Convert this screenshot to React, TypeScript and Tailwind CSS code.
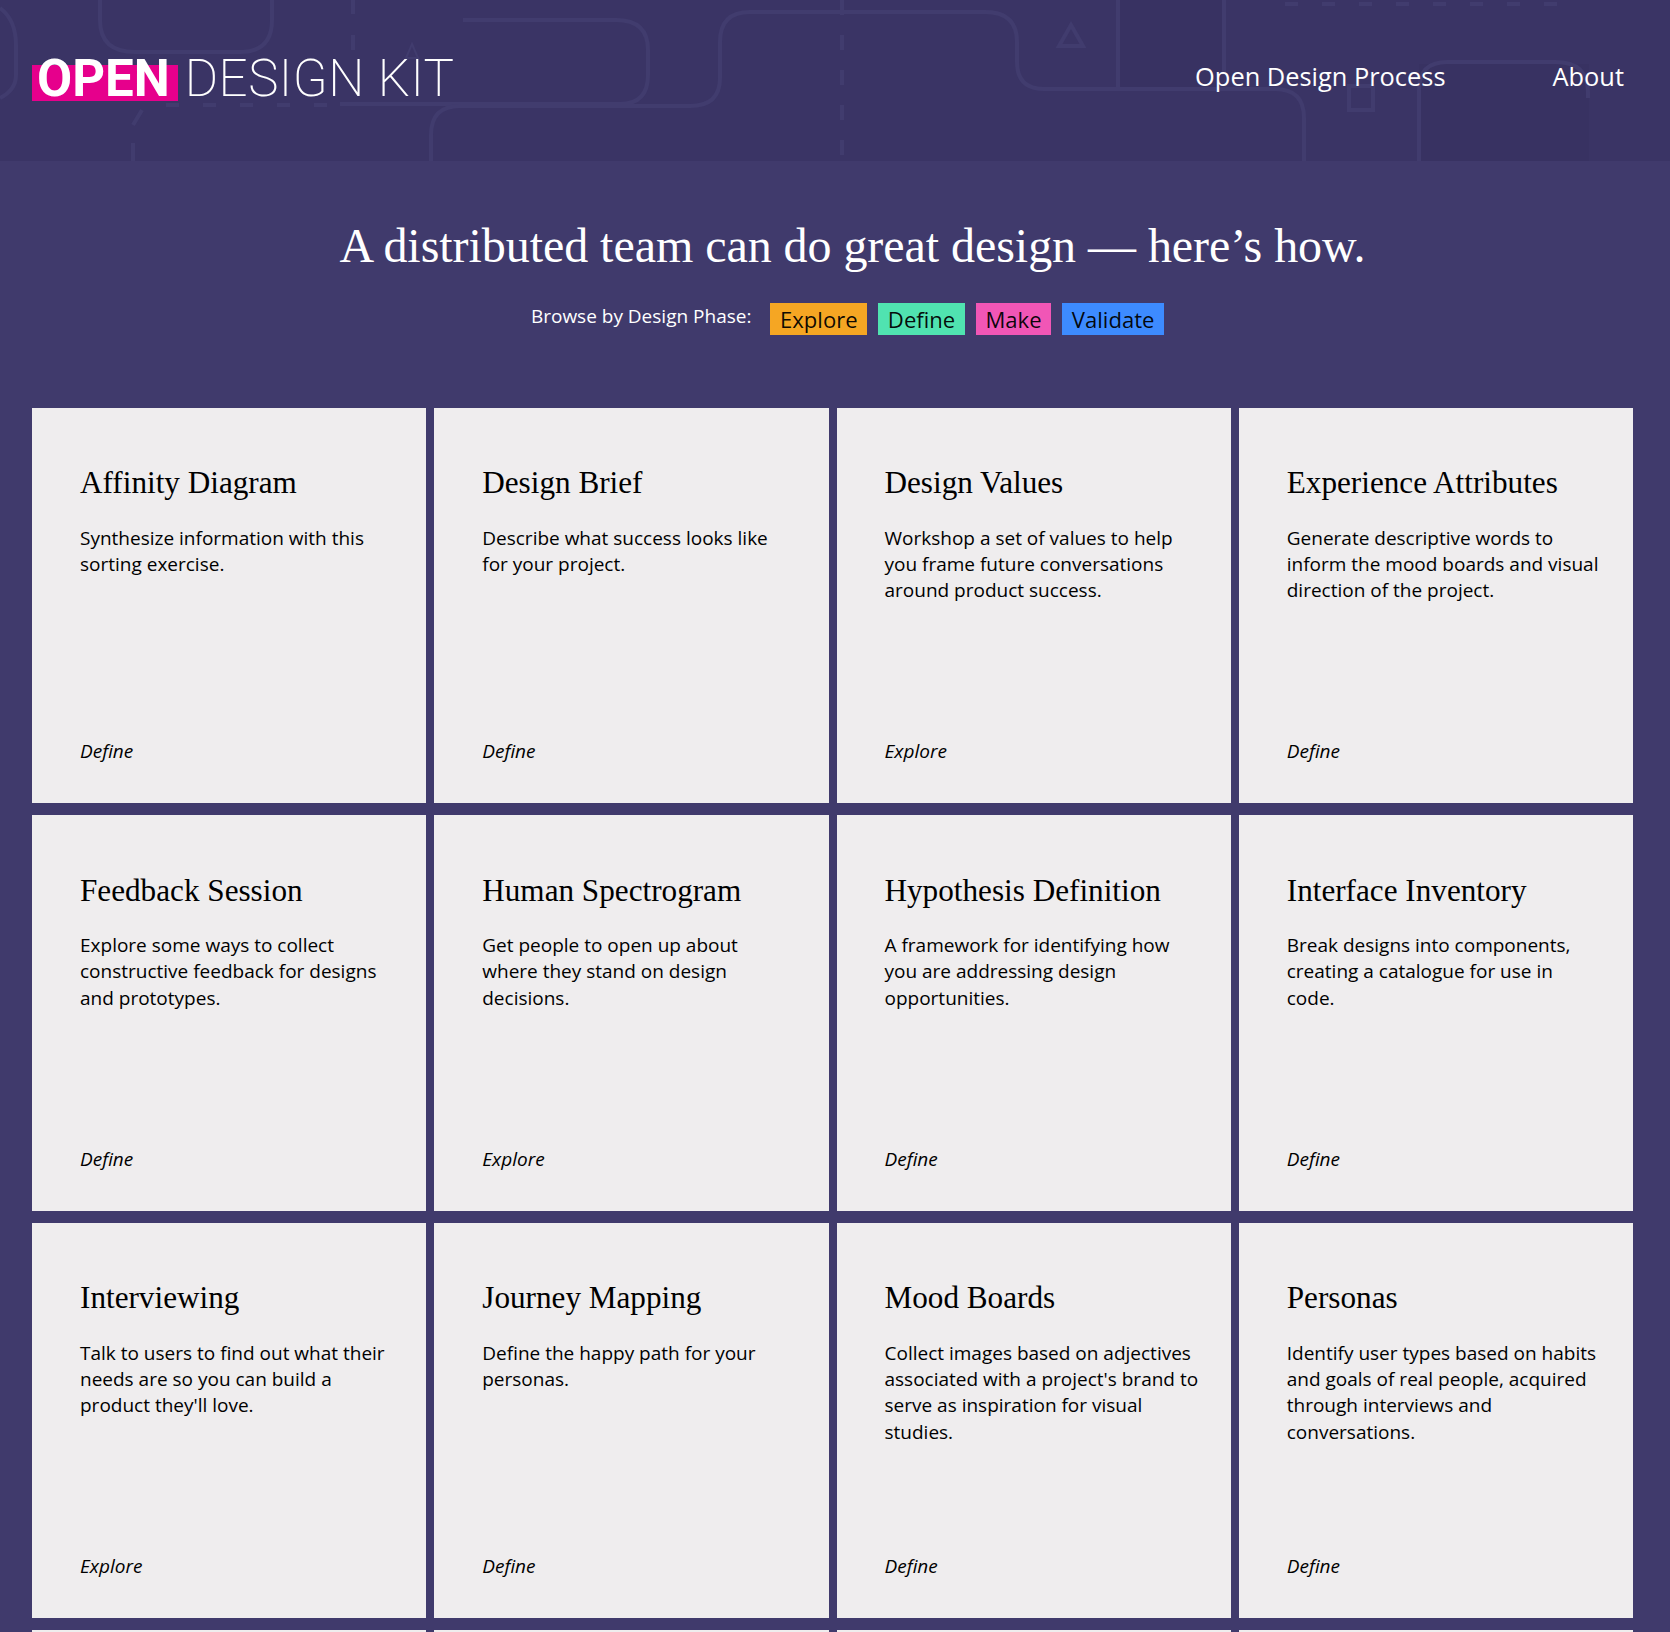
const SANS = "font-['Open_Sans',sans-serif]";

type CardData = { title: string; body: string; phase: string };

const cards: CardData[] = [
  { title: "Affinity Diagram", body: "Synthesize information with this sorting exercise.", phase: "Define" },
  { title: "Design Brief", body: "Describe what success looks like for your project.", phase: "Define" },
  { title: "Design Values", body: "Workshop a set of values to help you frame future conversations around product success.", phase: "Explore" },
  { title: "Experience Attributes", body: "Generate descriptive words to inform the mood boards and visual direction of the project.", phase: "Define" },
  { title: "Feedback Session", body: "Explore some ways to collect constructive feedback for designs and prototypes.", phase: "Define" },
  { title: "Human Spectrogram", body: "Get people to open up about where they stand on design decisions.", phase: "Explore" },
  { title: "Hypothesis Definition", body: "A framework for identifying how you are addressing design opportunities.", phase: "Define" },
  { title: "Interface Inventory", body: "Break designs into components, creating a catalogue for use in code.", phase: "Define" },
  { title: "Interviewing", body: "Talk to users to find out what their needs are so you can build a product they'll love.", phase: "Explore" },
  { title: "Journey Mapping", body: "Define the happy path for your personas.", phase: "Define" },
  { title: "Mood Boards", body: "Collect images based on adjectives associated with a project's brand to serve as inspiration for visual studies.", phase: "Define" },
  { title: "Personas", body: "Identify user types based on habits and goals of real people, acquired through interviews and conversations.", phase: "Define" },
];

function HeaderPattern() {
  return (
    <svg className="absolute inset-0 h-full w-full" viewBox="0 0 1670 161" preserveAspectRatio="none" fill="none" aria-hidden="true">
      <rect x="1419" y="64" width="170" height="97" fill="#383262" />
      <rect x="1118" y="0" width="106" height="87" fill="#383262" />
      <g stroke="#413c6e" strokeWidth="4">
        <path d="M0 8 Q16 20 16 45 L16 75 Q16 90 0 98" />
        <path d="M100 0 L100 20 Q100 52 135 52 L240 52 Q272 52 272 20 L272 0" />
        <path d="M463 20 L616 20 Q648 20 648 50 L648 75 Q648 104 620 104 L340 104" />
        <path d="M166 105 H335" strokeDasharray="13 24" />
        <path d="M142 110 L133 125 M133 143 V161" />
        <path d="M431 161 L431 135 Q431 106 460 106 L690 106 Q720 106 720 78 L720 42 Q720 12 750 12 L985 12 Q1017 12 1017 42 L1017 62 Q1017 89 1044 89 L1275 89 Q1304 89 1304 118 L1304 161" />
        <path d="M1118 0 V89 M1224 0 V75" />
        <path d="M842 0 V161" strokeDasharray="15 20" />
        <path d="M353 0 V14 M353 35 V50" />
        <path d="M1071 25 L1083 46 H1059 Z" />
        <path d="M412 44 L418 58 H406 Z" strokeWidth="2" />
        <path d="M1285 4 H1580" strokeDasharray="13 24" />
        <rect x="1349" y="86" width="24" height="24" />
        <path d="M1419 161 V90 Q1419 62 1447 62 L1555 62 Q1588 62 1588 92 V98" />
      </g>
    </svg>
  );
}

function Card({ title, body, phase }: CardData) {
  return (
    <div className="flex h-[395.5px] flex-col bg-[#efedee] pb-[39px] pl-[48px] pr-[32px] pt-[55.5px] text-black">
      <h2 className="font-['Liberation_Serif',serif] text-[31.2px] leading-[40px] font-normal">{title}</h2>
      <p className={`${SANS} mt-[21.5px] text-[19px] leading-[26.4px]`}>{body}</p>
      <div className={`${SANS} mt-auto text-[19px] leading-[26px] italic`}>{phase}</div>
    </div>
  );
}

function Pill({ label, color }: { label: string; color: string }) {
  return <span className={`${color} px-[9.6px] text-[22.1px] leading-[32px] text-black/95`}>{label}</span>;
}

export default function App() {
  return (
    <div className={`${SANS} h-[1632px] overflow-hidden bg-[#403a6c]`}>
      <header className="relative flex h-[161px] items-center justify-between overflow-hidden bg-[#3a3465] pl-[32px] pr-[46px] text-white">
        <HeaderPattern />
        <div className="relative mb-[4px] flex items-baseline font-['Roboto',sans-serif] text-[51px] leading-[60px]">
          <span className="relative mr-[7px] pl-[5px] pr-[8px] font-bold">
            <span className="absolute inset-x-0 bottom-[8px] top-[16px] bg-[#e6008c]" />
            <span className="relative">OPEN</span>
          </span>
          <span className="font-extralight tracking-[0.5px]">DESIGN KIT</span>
        </div>
        <nav className="relative mb-[10px] flex gap-[107px] text-[25.4px] leading-[32px]">
          <span>Open Design Process</span>
          <span>About</span>
        </nav>
      </header>
      <main className="px-[32px]">
        <h1 className="mt-[53px] pl-[35px] text-center font-['Liberation_Serif',serif] text-[48px] leading-[64px] font-normal tracking-[-0.05px] text-white">
          A distributed team can do great design — here’s how.
        </h1>
        <div className="mt-[25px] flex items-center justify-center pl-[25px] text-white">
          <span className="mb-[6px] mr-[19px] text-[19px] leading-[26px]">Browse by Design Phase:</span>
          <div className="flex gap-[11px]">
            <Pill label="Explore" color="bg-[#f5a623]" />
            <Pill label="Define" color="bg-[#50e3b0]" />
            <Pill label="Make" color="bg-[#f156b6]" />
            <Pill label="Validate" color="bg-[#3d8bff]" />
          </div>
        </div>
        <div className="mt-[72.5px] grid w-[1601px] grid-cols-4 gap-x-[8px] gap-y-[12px]">
          {cards.map((c) => (
            <Card key={c.title} {...c} />
          ))}
          <div className="h-[395.5px] bg-[#efedee]" />
          <div className="h-[395.5px] bg-[#efedee]" />
          <div className="h-[395.5px] bg-[#efedee]" />
          <div className="h-[395.5px] bg-[#efedee]" />
        </div>
      </main>
    </div>
  );
}
